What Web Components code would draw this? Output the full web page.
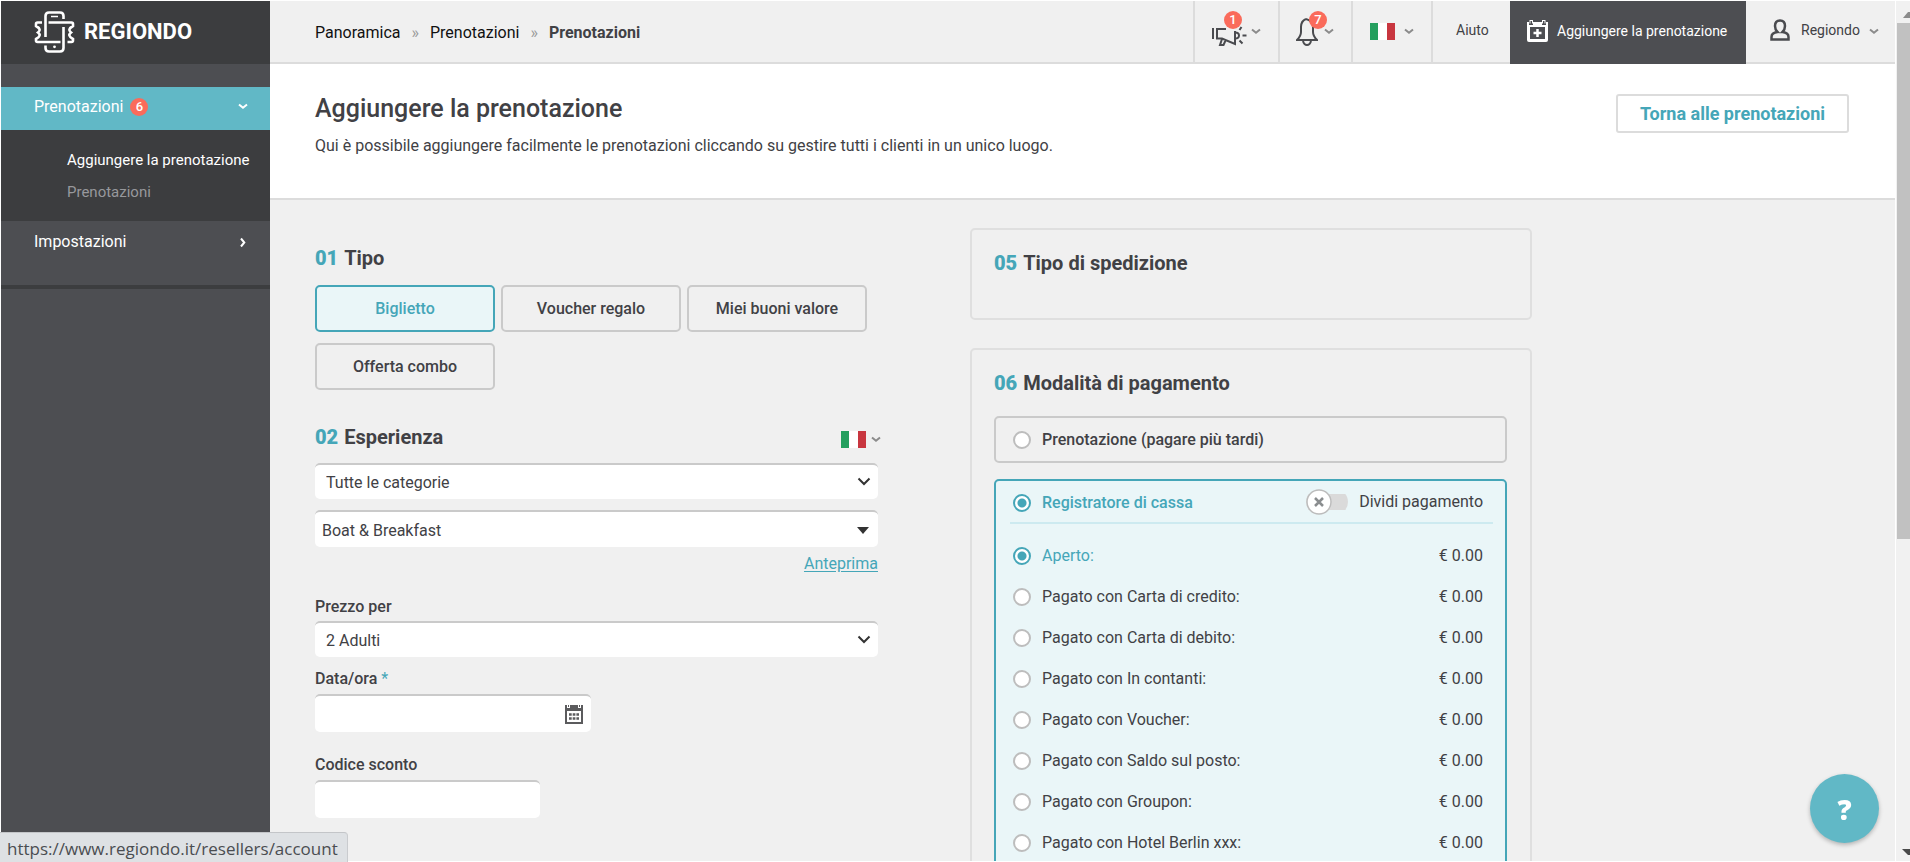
<!DOCTYPE html>
<html lang="it">
<head>
<meta charset="utf-8">
<title>Aggiungere la prenotazione</title>
<style>
  :root {
    --ink: #414145;
    --teal: #45a6b8;
    --teal-bg: #61b8c6;
    --pale: #eaf6f8;
    --page: #f0f0f0;
    --line: #dcdcdc;
    --edge: #cacaca;
    --badge: #fa6b5b;
    --dark: #4d4e52;
    --darker: #3c3d3f;
  }
  * { box-sizing: border-box; }
  html, body { height: 100%; margin: 0; }
  body { font: 16px/20px Roboto, "Liberation Sans", sans-serif; color: var(--ink); background: #fff; overflow: hidden; }
</style>
</head>
<body>
<booking-app></booking-app>
<script>
const define = (name, markup, setup) => {
  const tpl = document.createElement('template');
  customElements.define(name, class extends HTMLElement {
    connectedCallback() {
      if (this.shadowRoot) return;
      const root = this.attachShadow({ mode: 'open' });
      tpl.innerHTML = '<style>*{box-sizing:border-box}button,input,select{font:inherit;color:inherit;margin:0}button{cursor:pointer}a{color:inherit;text-decoration:none}</style>'
        + (typeof markup === 'function' ? markup(this) : markup);
      root.append(tpl.content.cloneNode(true));
      if (setup) setup(root, this);
    }
  });
};

/* Small shared pieces */
define('ui-chevron', `
<style>:host{display:inline-flex;color:#8b8b8b}svg{display:block}</style>
<svg width="10" height="7" viewBox="0 0 10 7"><path d="M1 1.5 5 4.800 9 1.500" fill="none" stroke="currentColor" stroke-width="2"/></svg>`);

define('it-flag', `
<style>:host{display:inline-block}svg{display:block}</style>
<svg width="25" height="17" viewBox="0 0 25 17"><path fill="#249f5e" d="M0 0h8v17H0z"/><path fill="#fff" d="M8 0h9v17H8z"/><path fill="#c8363f" d="M17 0h8v17h-8z"/></svg>`);

define('count-badge', `
<style>:host{display:inline-grid;place-items:center;width:18px;height:18px;border-radius:50%;background:var(--badge);color:#fff;font-size:13px;line-height:18px;font-weight:500}</style>
<slot></slot>`);

define('section-title', el => `
<style>:host{display:block}h2{margin:0;font-size:20px;line-height:24px;font-weight:700}b{color:var(--teal);margin-right:6px}</style>
<h2><b>${el.getAttribute('num')}</b><slot></slot></h2>`);

/* Sidebar */
define('app-logo', `
<style>
:host{display:block;background:var(--darker)}
a{display:flex;align-items:center;gap:9px;height:63px;padding:0 0 2px 33px;color:#fff;font-size:22px;line-height:24px;font-weight:700}
</style>
<a href="#"><svg width="41" height="42" viewBox="0 0 41 42" fill="none" stroke="#fff" stroke-width="2.600">
<path d="M11.500 26V5Q11.500 1.500 15 1.500H26Q29.500 1.500 29.500 5V8M29.500 16V37Q29.500 40.500 26 40.500H15Q11.500 40.500 11.500 37V34.500"/>
<path d="M14.500 11.500H37.500Q39 11.500 39 13V15C34.500 17.500 34.500 19.500 37 21.500C34.500 23.500 34.500 25.500 39 28V29.500Q39 31 37.500 31H33.500M26.500 31H3.500Q2 31 2 29.500V28C6.500 25.500 6.500 23.500 4 21.500C6.500 19.500 6.500 17.500 2 15V13Q2 11.500 3.500 11.500H8"/>
<path d="M17 5.500h7" stroke-width="1.500"/><circle cx="20.500" cy="35.800" r="1.400" fill="#fff" stroke="none"/></svg>
<span>REGIONDO</span></a>`);

define('app-sidebar', `
<style>
:host{display:flex;flex-direction:column;background:var(--dark);color:#fff;min-height:0}
nav{margin-top:23px;border-bottom:4px solid var(--darker)}
.row{display:flex;align-items:center;gap:7px;height:43px;padding:0 22px 4px 33px}
.row.on{background:var(--teal-bg)}
.row ui-chevron{margin-left:auto;color:#fff}
.row .side{transform:rotate(-90deg)}
.sub{margin:0;padding:17px 0 0 66px;height:91px;list-style:none;background:var(--darker);font-size:15px;line-height:26px;white-space:nowrap}
.sub li{height:32px}
.sub li+li{color:#97989c}
.last{height:64px;align-items:flex-start;padding-top:11px}
.last ui-chevron{margin-top:7px}
</style>
<app-logo></app-logo>
<nav>
<a class="row on" href="#"><span>Prenotazioni</span><count-badge>6</count-badge><ui-chevron></ui-chevron></a>
<ul class="sub"><li><a href="#">Aggiungere la prenotazione</a></li><li><a href="#">Prenotazioni</a></li></ul>
<a class="row last" href="#"><span>Impostazioni</span><ui-chevron class="side"></ui-chevron></a>
</nav>`);

/* Top bar */
define('top-bar', `
<style>
:host{display:flex;height:63px;background:var(--page);border-bottom:2px solid var(--line)}
.crumbs{display:flex;align-items:center;gap:11px;margin-right:auto;padding:2px 0 0 45px;color:#111}
.crumbs i{font-style:normal;color:#999}
.crumbs b{color:var(--ink);font-weight:700}
.item{position:relative;display:flex;align-items:center;border:0;border-left:2px solid var(--line);background:none;height:61px;padding:0 0 0 16px;font-size:14px;line-height:20px;text-align:left}
.item count-badge{position:absolute;top:10px}
.news{width:85px;gap:4px}.news count-badge{left:29px}
.bell{width:73px;gap:6px}.bell count-badge{left:29px}
.lang{width:80px;gap:9px;padding-left:17px}
.help{width:79px;padding:0 0 4px 23px}
.add{width:236px;height:63px;gap:9px;padding:0 0 4px 17px;border:0;background:var(--dark);color:#fff}
.user{width:149px;gap:11px;padding:0 0 4px 24px;border:0}
.user ui-chevron{padding-top:4px;margin-left:-2px}
svg{display:block;flex:none}
</style>
<nav class="crumbs"><a href="#">Panoramica</a><i>»</i><a href="#">Prenotazioni</a><i>»</i><b>Prenotazioni</b></nav>
<button class="item news" aria-label="Novità">
<svg width="36" height="30" viewBox="0 0 36 30" fill="none" stroke="#4a4b4f" stroke-width="2"><path d="M2 11v11M15 12H6v9.500h5L24 27V14M11 22l-2 6h3.500l2-4.500"/><path d="M24 15.500q4 0 4 3t-4 3M31.500 18.500h4M28.500 13l2-3M28.500 23.500l3 3"/></svg>
<ui-chevron></ui-chevron><count-badge>1</count-badge></button>
<button class="item bell" aria-label="Notifiche">
<svg width="22" height="28" viewBox="0 0 22 28" fill="none" stroke="#4a4b4f" stroke-width="2"><path d="M10 1Q5 3 5 9v5q0 4-4 8h20q-4-4-4-8V9q0-6-7-8M7 23q1 4 4 4t4-4"/></svg>
<ui-chevron></ui-chevron><count-badge>7</count-badge></button>
<button class="item lang" aria-label="Lingua"><it-flag></it-flag><ui-chevron></ui-chevron></button>
<a class="item help" href="#">Aiuto</a>
<a class="item add" href="#"><svg width="21" height="22" viewBox="0 0 21 22"><path fill="#fff" d="M0 2h2v3h4V2h9v3h4V2h2v18q0 2-2 2H2q-2 0-2-2z"/><path d="M3 0v3.500M5.500 0v3.500M15.500 0v3.500M18 0v3.500M3 .5h2.500M15.500 .5H18" stroke="#fff"/><path fill="#4d4e52" d="M3 7h15v12H3z"/><path stroke="#fff" stroke-width="2.500" d="M10.500 9v8M6.500 13h8"/></svg>Aggiungere la prenotazione</a>
<button class="item user"><svg width="20" height="22" viewBox="0 0 20 22" fill="none" stroke="#4a4b4f" stroke-width="2.500"><path d="M10 1.500c-3.500 0-5 2.500-5 5.500s1 4.500 2.500 6C3.500 13.500 1.500 15.500 1.500 18v2.500h17V18c0-2.500-2-4.500-6-5 1.500-1.500 2.500-3 2.500-6s-1.500-5.500-5-5.500z"/></svg>Regiondo<ui-chevron></ui-chevron></button>`);

/* White band with the page title */
define('page-header', `
<style>
:host{display:flex;justify-content:space-between;align-items:flex-start;height:136px;padding:30px 46px 0 45px;background:#fff;border-bottom:2px solid var(--line)}
h1{margin:0;font-size:25px;line-height:30px;font-weight:500}
p{margin:12px 0 0}
.back{display:grid;place-items:center;width:233px;height:39px;border:2px solid var(--line);border-radius:3px;color:var(--teal);font-size:18px;font-weight:700;line-height:24px}
</style>
<div><h1><slot name="title"></slot></h1><p><slot></slot></p></div>
<a class="back" href="#">Torna alle prenotazioni</a>`);

/* Ticket type choice */
define('type-picker', `
<style>
:host{display:flex;flex-wrap:wrap;gap:11px 6px}
button{width:180px;height:47px;border:2px solid var(--edge);border-radius:5px;background:none;font-weight:500}
button[aria-pressed=true]{border-color:var(--teal);background:var(--pale);color:var(--teal)}
</style>
<button aria-pressed="true">Biglietto</button><button aria-pressed="false">Voucher regalo</button><button aria-pressed="false">Miei buoni valore</button><button aria-pressed="false">Offerta combo</button>`,
root => root.querySelectorAll('button').forEach(b => b.onclick = () =>
  root.querySelectorAll('button').forEach(x => x.setAttribute('aria-pressed', x === b))));

const fieldCss = `
:host{display:block}
label{display:block;height:25px;padding-top:1px;font-weight:500;line-height:20px}
label span{color:var(--teal);font-weight:400}
.box{position:relative}
select,input{display:block;width:100%;border:0;border-top:2px solid var(--edge);border-radius:5px;background:#fff;outline-offset:-2px}
svg{position:absolute;pointer-events:none}`;

define('select-field', el => `
<style>${fieldCss}
select{appearance:none;height:36px;padding:2px 40px 0 11px}
:host([solid]) select{height:37px;padding-left:7px}
svg{right:7px;top:14px}
:host([solid]) svg{right:9px;top:17px}
</style>
${el.hasAttribute('label') ? `<label for="c">${el.getAttribute('label')}</label>` : ''}
<div class="box"><select id="c" aria-label="${el.getAttribute('label') || el.getAttribute('name')}"><option>${el.getAttribute('value')}</option></select>
${el.hasAttribute('solid')
  ? '<svg width="12" height="7" viewBox="0 0 12 7"><path fill="#333" d="M0 0h12L6 7z"/></svg>'
  : '<svg width="14" height="9" viewBox="0 0 14 9"><path d="M1.500 1.500 7 7l5.500-5.500" fill="none" stroke="#333" stroke-width="2"/></svg>'}</div>`);

define('text-field', el => `
<style>${fieldCss}
input{height:38px;padding:0 11px}
label{height:26px}
svg{right:8px;top:11px}
</style>
<label for="c">${el.getAttribute('label')}${el.hasAttribute('required') ? ' <span>*</span>' : ''}</label>
<div class="box"><input id="c" type="text">${el.hasAttribute('date')
  ? '<svg width="18" height="19" viewBox="0 0 18 19"><path fill="#5b5b5d" d="M0 0h2v3h3V0h8v3h3V0h2v19H0zM2 6v11h14V6z" fill-rule="evenodd"/><path d="M3.500 0v2M14.500 0v2" stroke="#5b5b5d"/><path d="M4 9.500h10M4 13.500h10" stroke="#5b5b5d" stroke-width="2.500" stroke-dasharray="2.700 1"/></svg>' : ''}</div>`);

define('booking-form', `
<style>
:host{display:block;padding-top:18px}
type-picker{margin-top:15px}
.exp{display:flex;justify-content:space-between;align-items:center;margin:35px 0 14px;height:24px}
.exp button{display:flex;align-items:center;gap:5px;padding:5px 0 0;border:0;background:none;margin-right:-3px}
select-field+select-field{margin-top:11px}
.preview{display:block;width:max-content;margin:7px 0 22px auto;color:var(--teal);text-decoration:underline;text-underline-offset:2px}
.date{margin-top:11px;max-width:276px}
.code{margin-top:22px;max-width:225px}
</style>
<section-title num="01">Tipo</section-title>
<type-picker></type-picker>
<div class="exp"><section-title num="02">Esperienza</section-title><button aria-label="Lingua"><it-flag></it-flag><ui-chevron></ui-chevron></button></div>
<select-field name="Categoria" value="Tutte le categorie"></select-field>
<select-field name="Esperienza" value="Boat &amp; Breakfast" solid></select-field>
<a class="preview" href="#">Anteprima</a>
<select-field label="Prezzo per" value="2 Adulti"></select-field>
<text-field class="date" label="Data/ora" required date></text-field>
<text-field class="code" label="Codice sconto"></text-field>`);

/* Right column cards */
define('info-card', `
<style>:host{display:block;border:2px solid #dfdfdf;border-radius:5px;padding:21px 23px 21px 22px}</style>
<slot></slot>`);

const methods = ['Aperto', 'Pagato con Carta di credito', 'Pagato con Carta di debito', 'Pagato con In contanti', 'Pagato con Voucher', 'Pagato con Saldo sul posto', 'Pagato con Groupon', 'Pagato con Hotel Berlin xxx'];
define('payment-options', `
<style>
:host{display:block;margin-top:21px}
input[type=radio]{appearance:none;flex:none;width:18px;height:18px;border:2px solid #bdbdbd;border-radius:50%;background:#fff}
input[type=radio]:checked{border-color:var(--teal);background:radial-gradient(circle,var(--teal) 4px,#fff 5px)}
label{display:flex;align-items:center;gap:11px}
.later,.cash{border:2px solid var(--edge);border-radius:5px}
.later{height:47px;padding-left:17px;font-weight:500}
.cash{margin-top:16px;border-color:var(--teal);background:var(--pale);padding-bottom:20px}
.head{display:flex;justify-content:space-between;height:43px;margin:0 12px 11px 14px;padding:1px 10px 0 3px;border-bottom:2px solid #cdeaf0}
.head .reg{color:var(--teal);font-weight:500;padding-top:2px}
.row{display:flex;align-items:center;justify-content:space-between;height:41px;padding:0 22px 0 17px}
.row label:has(:checked){color:var(--teal)}
.switch{position:relative}
.switch input{appearance:none;width:42px;height:26px;background:linear-gradient(#dadada,#dadada) 0 5px/42px 16px no-repeat;border-radius:13px}
.switch svg{position:absolute;left:0}
</style>
<label class="later"><input type="radio" name="mode">Prenotazione (pagare più tardi)</label>
<div class="cash">
<div class="head"><label class="reg"><input type="radio" name="mode" checked>Registratore di cassa</label>
<label class="switch"><input type="checkbox"><svg width="26" height="26" viewBox="0 0 26 26"><circle cx="13" cy="13" r="12" fill="#fff" stroke="#bcbcbc" stroke-width="1.500"/><path d="m9 9 8 8m0-8-8 8" stroke="#8a8d8f" stroke-width="2.500"/></svg>Dividi pagamento</label></div>
${methods.map((m, i) => `<div class="row"><label><input type="radio" name="method"${i ? '' : ' checked'}>${m}:</label><span>€ 0.00</span></div>`).join('')}
</div>`);

define('scroll-rail', `
<style>:host{display:flex;flex-direction:column;justify-content:space-between;background:#f1f1f1;padding-left:1px}
svg{display:block;flex:none}div{height:60%;margin-bottom:auto;background:#c1c1c1}</style>
<svg width="13" height="22" viewBox="0 0 13 22"><path fill="#8b8b8b" d="M6 17l5-6h2v6z"/></svg><div></div><svg width="13" height="14" viewBox="0 0 13 14"><path fill="#4a4a4a" d="M5 2h8v6h-2z"/></svg>`);

define('help-bubble', `
<style>:host{position:fixed;right:31px;bottom:19px}
button{display:grid;place-items:center;width:69px;height:69px;border:0;border-radius:50%;background:var(--teal-bg);color:#fff;font:800 28px/36px "Open Sans",sans-serif;box-shadow:0 2px 4px rgba(0,0,0,.25)}</style>
<button aria-label="Aiuto">?</button>`);

define('link-status', `
<style>:host{position:fixed;left:0;bottom:0;height:30px;padding:0 9px 0 7px;background:#dee1e4;border-top:1px solid #c3c5c8;border-right:1px solid #c9cbce;border-top-right-radius:4px;font:17px/32px "Open Sans","Noto Sans",sans-serif;color:#4a4d51}</style>
<slot></slot>`);

define('booking-app', `
<style>
:host{display:grid;grid-template-columns:269px minmax(0,1fr) 14px;height:100vh;padding:1px 0 1px 1px}
main{background:var(--page);overflow:hidden;margin-right:1px}
.cols{display:grid;grid-template-columns:minmax(0,563px) minmax(0,562px);gap:92px;align-items:start;padding:28px 45px 0}
.ship{height:92px;margin-bottom:28px}
</style>
<app-sidebar></app-sidebar>
<main>
<top-bar></top-bar>
<page-header><span slot="title">Aggiungere la prenotazione</span>Qui è possibile aggiungere facilmente le prenotazioni cliccando su gestire tutti i clienti in un unico luogo.</page-header>
<div class="cols">
<booking-form></booking-form>
<div>
<info-card class="ship"><section-title num="05">Tipo di spedizione</section-title></info-card>
<info-card><section-title num="06">Modalità di pagamento</section-title><payment-options></payment-options></info-card>
</div>
</div>
</main>
<scroll-rail></scroll-rail>
<help-bubble></help-bubble>
<link-status>https://www.regiondo.it/resellers/account</link-status>`);
</script>
</body>
</html>
